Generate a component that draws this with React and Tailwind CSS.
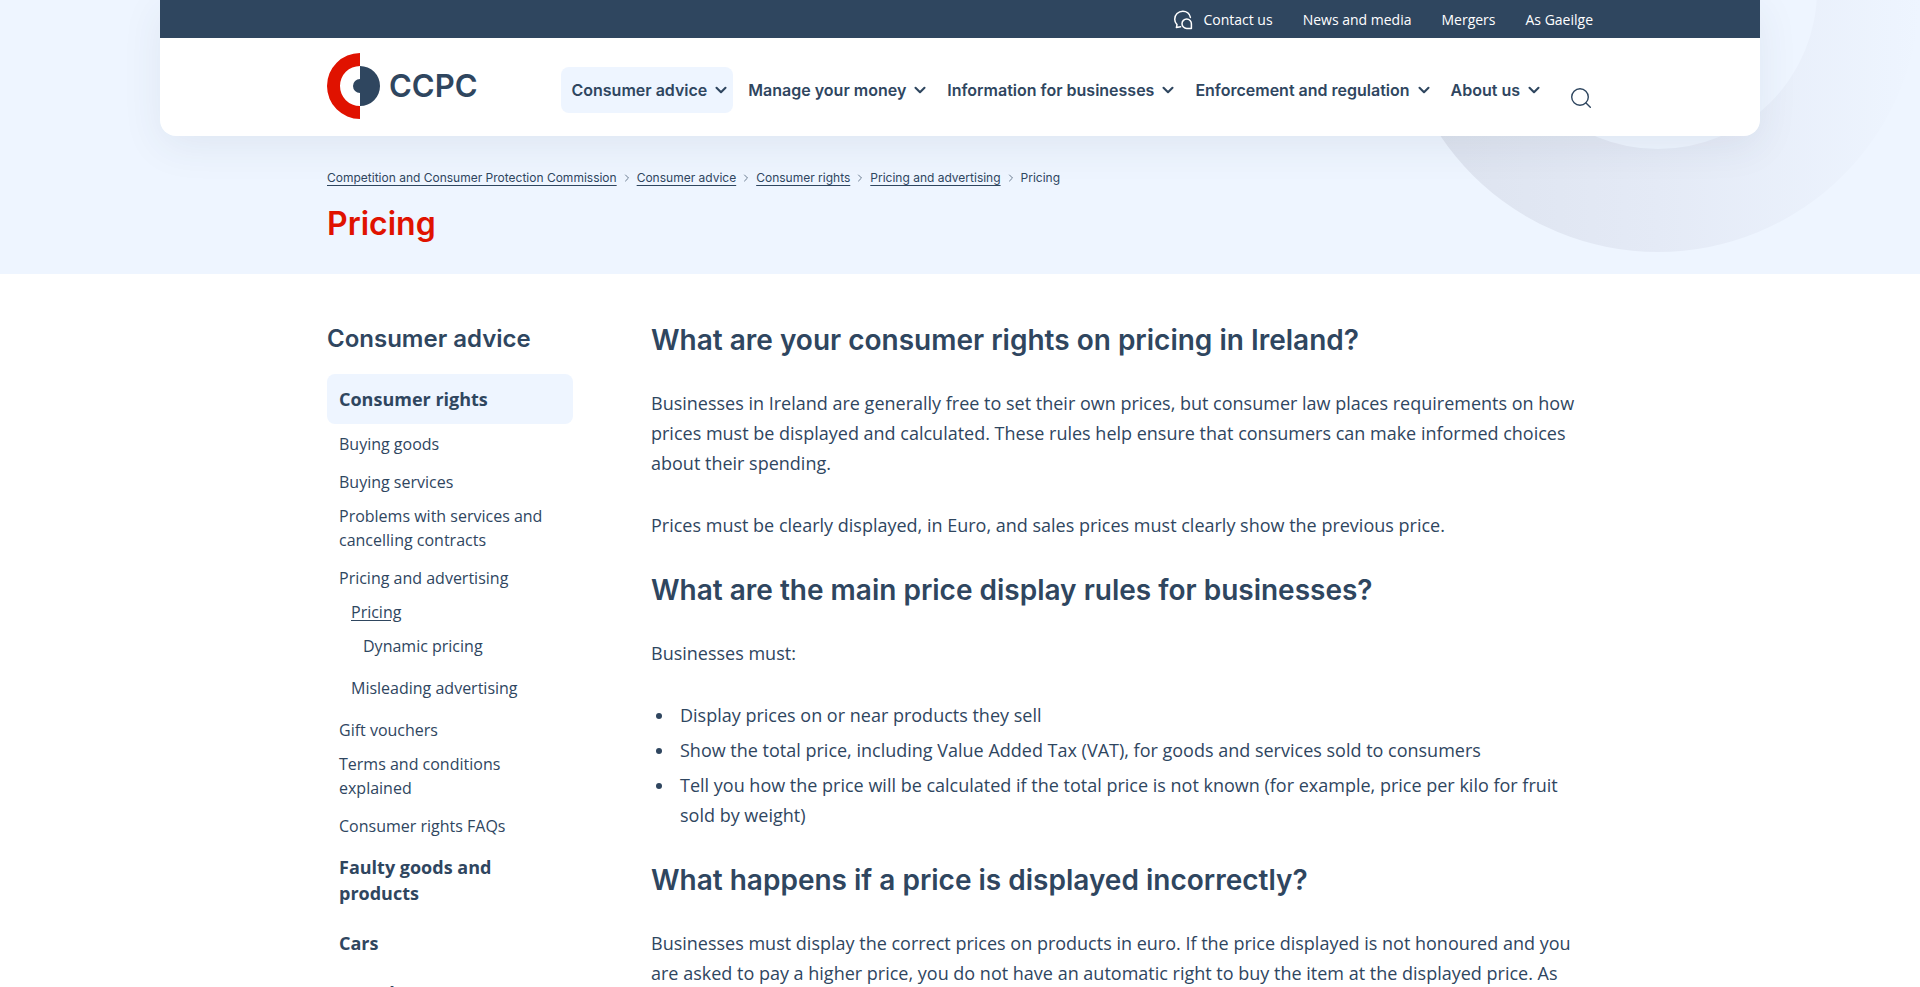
import { ChevronDown, ChevronRight } from 'lucide-react'

const topLinks = ['News and media', 'Mergers', 'As Gaeilge']

const navItems = [
  { label: 'Consumer advice', active: true },
  { label: 'Manage your money' },
  { label: 'Information for businesses' },
  { label: 'Enforcement and regulation' },
  { label: 'About us' },
]

const crumbs = [
  'Competition and Consumer Protection Commission',
  'Consumer advice',
  'Consumer rights',
  'Pricing and advertising',
]

export default function App() {
  return (
    <div className="min-h-screen bg-white font-['Open_Sans',sans-serif] text-[#2f465f]">
      <div className="relative overflow-hidden bg-[#eef5ff] pb-[30px]">
        <HeroRings />
        <Header />
        <div className="relative mx-auto max-w-[1266px] pt-8 font-[Inter,sans-serif]">
          <Breadcrumbs />
          <h1 className="mt-4 text-[32px] leading-10 font-semibold text-[#e01200]">Pricing</h1>
        </div>
      </div>

      <div className="mx-auto flex max-w-[1266px] gap-[78px] pt-12 pb-16">
        <Sidebar />
        <Article />
      </div>
    </div>
  )
}

function Header() {
  return (
    <header className="relative mx-auto w-10/12 rounded-b-2xl bg-white shadow-[0_10px_40px_rgba(47,70,95,0.08)]">
      <div className="bg-[#2f465f]">
        <div className="mx-auto flex h-[38px] max-w-[1266px] items-center justify-end gap-[30px] pt-0.5 text-sm text-white">
          <a href="#contact" className="flex items-center gap-[10px]">
            <ChatIcon />
            Contact us
          </a>
          {topLinks.map(label => (
            <a key={label} href="#top">{label}</a>
          ))}
        </div>
      </div>

      <div className="mx-auto flex h-[98px] max-w-[1266px] items-center justify-between pb-0.5">
        <Logo />
        <nav className="flex items-center gap-[5px] pt-2 font-[Inter,sans-serif]" aria-label="Main">
          {navItems.map(item => (
            <button
              key={item.label}
              className={`flex h-[46px] items-center gap-[5px] rounded-lg pr-[3px] pl-[10px] text-base font-semibold ${item.active ? 'bg-[#eef5ff]' : ''}`}
            >
              {item.label}
              <ChevronDown size={18} strokeWidth={2.8} />
            </button>
          ))}
          <button className="mt-4 ml-4 py-1 pr-0.5 pl-1" aria-label="Search">
            <SearchIcon />
          </button>
        </nav>
      </div>
    </header>
  )
}

function Logo() {
  return (
    <a href="#home" className="flex items-center gap-[9px]" aria-label="CCPC home">
      <svg width="53" height="66" viewBox="0 0 53 66" aria-hidden="true">
        <path d="M33 0A33 33 0 0 0 33 66V53A20 20 0 0 1 33 13Z" fill="#e01200" />
        <path d="M33 13A20 20 0 0 1 33 53V40A7 7 0 0 1 33 26Z" fill="#2f465f" />
      </svg>
      <span className="font-[Inter,sans-serif] text-[31px] leading-8 font-semibold">CCPC</span>
    </a>
  )
}

function HeroRings() {
  return (
    <svg
      className="absolute top-0 right-0"
      width="524"
      height="252"
      viewBox="0 0 524 252"
      aria-hidden="true"
    >
      <defs>
        <linearGradient id="ring" x1="0" y1="0" x2="1" y2="0">
          <stop offset="0" stopColor="#dce2ee" />
          <stop offset="0.5" stopColor="#e4eaf6" />
          <stop offset="1" stopColor="#eef5ff" />
        </linearGradient>
      </defs>
      <path
        fillRule="evenodd"
        fill="url(#ring)"
        d="M0 -10a262 262 0 1 0 524 0a262 262 0 1 0 -524 0ZM103 -10a159 159 0 1 0 318 0a159 159 0 1 0 -318 0Z"
      />
    </svg>
  )
}

function Breadcrumbs() {
  return (
    <nav aria-label="Breadcrumb">
      <ol className="flex items-center text-xs leading-5">
        {crumbs.map(label => (
          <li key={label} className="flex items-center">
            <a href="#crumb" className="underline underline-offset-3">{label}</a>
            <ChevronRight size={12} strokeWidth={2} className="mx-1 text-[#6b7c90]" />
          </li>
        ))}
        <li aria-current="page">Pricing</li>
      </ol>
    </nav>
  )
}

function Sidebar() {
  return (
    <aside className="w-[246px] shrink-0">
      <h2 className="mb-[18px] font-[Inter,sans-serif] text-2xl leading-[34px] font-semibold">Consumer advice</h2>
      <ul>
        <li>
          <SectionLink active>Consumer rights</SectionLink>
          <ul className="mt-2 flex flex-col gap-[10px] pr-3 pb-1 pl-3 leading-6">
            <li className="pb-1"><a href="#goods">Buying goods</a></li>
            <li><a href="#services">Buying services</a></li>
            <li className="pb-1"><a href="#contracts">Problems with services and cancelling contracts</a></li>
            <li>
              <a href="#advertising">Pricing and advertising</a>
              <ul className="mt-[10px] flex flex-col gap-[10px] pb-2 pl-3">
                <li>
                  <a href="#pricing" className="underline underline-offset-2" aria-current="page">Pricing</a>
                  <ul className="mt-[10px] pb-2 pl-3">
                    <li><a href="#dynamic">Dynamic pricing</a></li>
                  </ul>
                </li>
                <li><a href="#misleading">Misleading advertising</a></li>
              </ul>
            </li>
            <li><a href="#gift">Gift vouchers</a></li>
            <li className="pb-1"><a href="#terms">Terms and conditions explained</a></li>
            <li><a href="#faqs">Consumer rights FAQs</a></li>
          </ul>
        </li>
        <li><SectionLink>Faulty goods and products</SectionLink></li>
        <li><SectionLink>Cars</SectionLink></li>
        <li><SectionLink>Travel</SectionLink></li>
      </ul>
    </aside>
  )
}

function SectionLink({ active, children }) {
  return (
    <a
      href="#section"
      className={`block rounded-lg p-3 text-lg leading-[26px] font-bold ${active ? 'bg-[#eef5ff]' : ''}`}
    >
      {children}
    </a>
  )
}

function Article() {
  return (
    <main className="min-w-0 flex-1 text-lg leading-[30px]">
      <Heading>What are your consumer rights on pricing in Ireland?</Heading>
      <p className="mb-8">
        Businesses in Ireland are generally free to set their own prices, but consumer law places requirements on how
        prices must be displayed and calculated. These rules help ensure that consumers can make informed choices
        about their spending.
      </p>
      <p className="mb-8">
        Prices must be clearly displayed, in Euro, and sales prices must clearly show the previous price.
      </p>
      <Heading>What are the main price display rules for businesses?</Heading>
      <p className="mb-8">Businesses must:</p>
      <ul className="mb-8 list-disc space-y-[5px] pl-6 [&>li]:pl-[5px]">
        <li>Display prices on or near products they sell</li>
        <li>Show the total price, including Value Added Tax (VAT), for goods and services sold to consumers</li>
        <li>
          Tell you how the price will be calculated if the total price is not known (for example, price per kilo for
          fruit sold by weight)
        </li>
      </ul>
      <Heading>What happens if a price is displayed incorrectly?</Heading>
      <p>
        Businesses must display the correct prices on products in euro. If the price displayed is not honoured and you
        are asked to pay a higher price, you do not have an automatic right to buy the item at the displayed price. As
      </p>
    </main>
  )
}

function Heading({ children }) {
  return <h2 className="mb-[30px] font-[Inter,sans-serif] text-[28px] leading-9 font-semibold">{children}</h2>
}

function ChatIcon() {
  return (
    <svg width="20" height="20" viewBox="0 0 20 20" fill="none" stroke="currentColor" strokeWidth="1.5" strokeLinecap="round" strokeLinejoin="round" aria-hidden="true">
      <path d="M17.4 7.4C16.8 3.8 13.6 1.2 9.8 1.2C5.3 1.2 1.7 4.8 1.7 9.2C1.7 11.4 2.6 13.2 4 14.6L3.4 17.6L7.6 16.8" />
      <path d="M18.4 18.4H13.8A4.7 4.7 0 1 1 18.4 13.8Z" />
    </svg>
  )
}

function SearchIcon() {
  return (
    <svg width="20" height="20" viewBox="0 0 20 20" fill="none" stroke="currentColor" strokeWidth="1.4" strokeLinecap="round" aria-hidden="true">
      <circle cx="9" cy="9" r="8.3" />
      <path d="M15 15L19.3 19.3" />
    </svg>
  )
}
